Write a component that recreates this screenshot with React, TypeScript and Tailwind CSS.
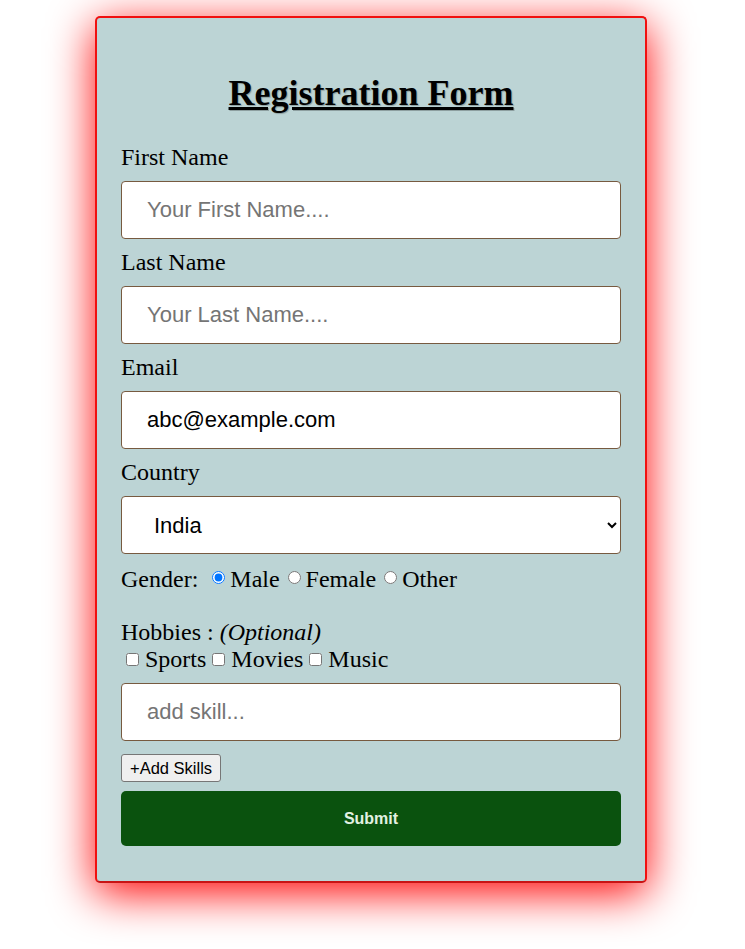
import React from 'react';

const inputClass =
  "block w-full h-[58px] mt-[10px] rounded-[4px] border border-[#775a40] bg-white pl-[25px] pr-3 text-[22px] text-black placeholder:text-[#757575] font-['Liberation_Sans',Arial,sans-serif] outline-none";

const Field: React.FC<{ label: string; first?: boolean; children: React.ReactNode }> = ({ label, first, children }) => (
  <div className={first ? 'mt-[29px]' : 'mt-[9px]'}>
    <label className="block text-[24px] leading-[28px]">{label}</label>
    {children}
  </div>
);

const App: React.FC = () => {
  return (
    <div className="min-h-screen bg-white pt-[16px] font-['Liberation_Serif','Times_New_Roman',serif] text-black">
      <form
        onSubmit={(e) => e.preventDefault()}
        className="ml-[95px] w-[552px] rounded-[5px] border-2 border-[#f01010] border-b-[#c81414] bg-[#bcd4d5] px-[24px] pt-[55px] pb-[35px] shadow-[0_10px_45px_red]"
      >
        <h1 className="text-center text-[36px] leading-[41px] font-bold underline [text-shadow:1px_1px_1px_rgba(0,0,0,0.25)]">
          Registration Form
        </h1>

        <Field label="First Name" first>
          <input type="text" placeholder="Your First Name...." className={inputClass} />
        </Field>

        <Field label="Last Name">
          <input type="text" placeholder="Your Last Name...." className={inputClass} />
        </Field>

        <Field label="Email">
          <input type="email" defaultValue="abc@example.com" className={inputClass} />
        </Field>

        <Field label="Country">
          <select defaultValue="India" className={inputClass + ' pl-[28px]'}>
            <option>India</option>
            <option>USA</option>
            <option>UK</option>
            <option>Canada</option>
          </select>
        </Field>

        <div className="mt-[11px] flex items-center text-[24px] leading-[28px]">
          <span>Gender:</span>
          <input type="radio" name="gender" defaultChecked className="ml-[14px] mr-[5px] mb-[4px]" />
          <span>Male</span>
          <input type="radio" name="gender" className="ml-[8px] mr-[5px] mb-[4px]" />
          <span>Female</span>
          <input type="radio" name="gender" className="ml-[8px] mr-[5px] mb-[4px]" />
          <span>Other</span>
        </div>

        <p className="mt-[26px] text-[24px] leading-[27px]">
          Hobbies : <i>(Optional)</i>
        </p>
        <div className="flex items-center text-[24px] leading-[27px]">
          <input type="checkbox" className="ml-[5px] mr-[6px]" />
          <span>Sports</span>
          <input type="checkbox" className="ml-[6px] mr-[6px]" />
          <span>Movies</span>
          <input type="checkbox" className="ml-[6px] mr-[6px]" />
          <span>Music</span>
        </div>

        <input type="text" placeholder="add skill..." className={inputClass + ' mt-[10px]'} />

        <button
          type="button"
          className="mt-[13px] block h-[28px] rounded-[3px] border border-[#767676] bg-[#efefef] px-[8px] text-[16.5px] leading-none font-['Liberation_Sans',Arial,sans-serif] text-black"
        >
          +Add Skills
        </button>

        <button
          type="submit"
          className="mt-[9px] block h-[55px] w-full rounded-[5px] bg-[#0a520e] text-[16px] font-bold text-[#e2f1e2] font-['Liberation_Sans',Arial,sans-serif]"
        >
          Submit
        </button>
      </form>
    </div>
  );
};

export default App;
